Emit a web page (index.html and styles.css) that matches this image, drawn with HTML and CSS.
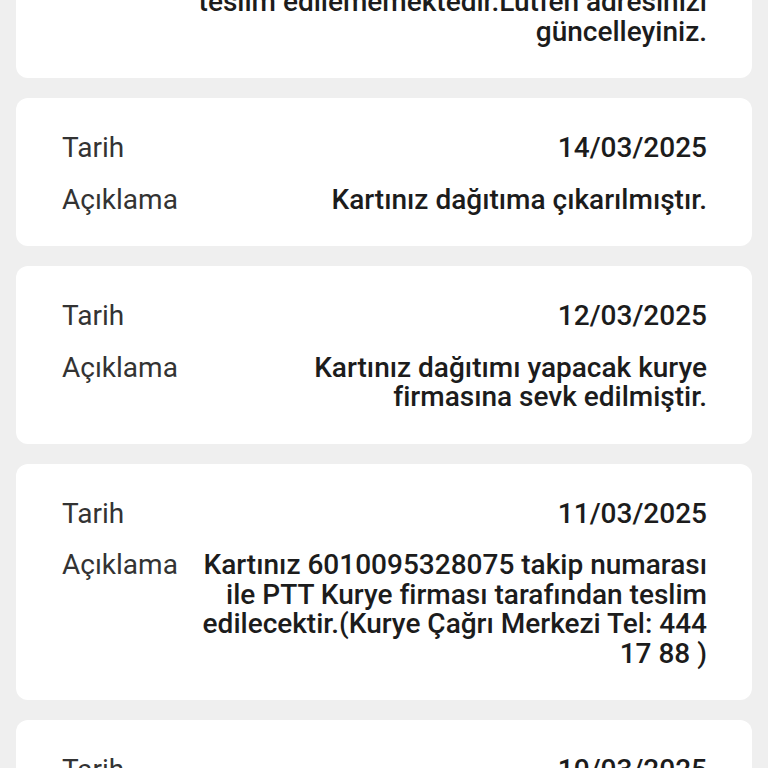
FILE: index.html
```html
<!DOCTYPE html>
<html lang="tr">
<head>
<meta charset="utf-8">
<title>Kart Takip</title>
<link rel="stylesheet" href="styles.css">
</head>
<body>
<main class="viewport">
  <ul class="list">
    <li class="card card-first">
      <div class="row"><span class="label">Tarih</span><span class="value">17/03/2025</span></div>
      <div class="row"><span class="label">Açıklama</span><span class="value">Kartınız kurye firması tarafından adresinizde bulunamadığınız için<br>teslim edilememektedir.Lütfen adresinizi güncelleyiniz.</span></div>
    </li>
    <li class="card">
      <div class="row"><span class="label">Tarih</span><span class="value">14/03/2025</span></div>
      <div class="row"><span class="label">Açıklama</span><span class="value">Kartınız dağıtıma çıkarılmıştır.</span></div>
    </li>
    <li class="card">
      <div class="row"><span class="label">Tarih</span><span class="value">12/03/2025</span></div>
      <div class="row"><span class="label">Açıklama</span><span class="value">Kartınız dağıtımı yapacak kurye firmasına sevk edilmiştir.</span></div>
    </li>
    <li class="card">
      <div class="row"><span class="label">Tarih</span><span class="value">11/03/2025</span></div>
      <div class="row"><span class="label">Açıklama</span><span class="value">Kartınız 6010095328075 takip numarası ile PTT Kurye firması tarafından teslim edilecektir.(Kurye Çağrı Merkezi Tel: 444 17 88 )</span></div>
    </li>
    <li class="card">
      <div class="row"><span class="label">Tarih</span><span class="value">10/03/2025</span></div>
      <div class="row"><span class="label">Açıklama</span><span class="value">Kartınız basılmıştır.</span></div>
    </li>
  </ul>
</main>
</body>
</html>
```
FILE: styles.css
```css
html, body {
  margin: 0;
  padding: 0;
  background: #efefef;
}
body {
  font-family: Roboto, "Liberation Sans", sans-serif;
  color: #1b1b1b;
}
.viewport {
  height: 768px;
  overflow: hidden;
}
.list {
  list-style: none;
  margin: 0;
  padding: 0 16px;
  display: flex;
  flex-direction: column;
  gap: 20px;
}
.card {
  background: #ffffff;
  border-radius: 12px;
  padding: 35px 45px 32px 46px;
  display: flex;
  flex-direction: column;
  gap: 22px;
}
.card-first {
  margin-top: -158.5px;
}
.row {
  display: flex;
  align-items: flex-start;
  gap: 18px;
  font-size: 28px;
  line-height: 29.5px;
}
.label {
  flex: none;
  color: #333333;
  font-weight: 400;
}
.value {
  flex: 1;
  text-align: right;
  font-weight: 500;
  color: #1c1c1c;
}
```
